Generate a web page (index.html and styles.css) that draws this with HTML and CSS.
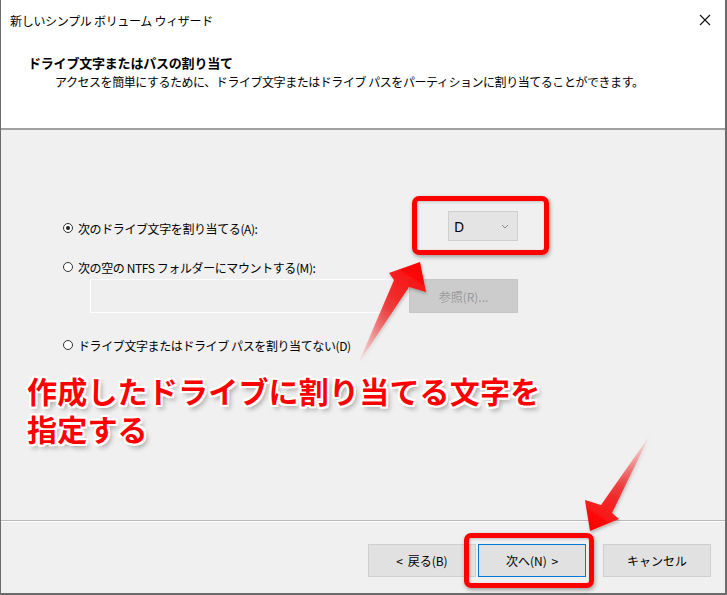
FILE: index.html
```html
<!DOCTYPE html>
<html lang="ja">
<head>
    <meta charset="UTF-8">
    <title>新しいシンプル ボリューム ウィザード</title>
    <link rel="stylesheet" href="styles.css">
</head>
<body>
    <div class="window">
        <div class="titlebar">
            <span class="title">新しいシンプル ボリューム ウィザード</span>
            <svg class="close" width="12" height="12" viewBox="0 0 12 12">
                <path d="M1 1 L11 11 M11 1 L1 11" stroke="#111" stroke-width="1.1" fill="none"/>
            </svg>
        </div>
        <div class="header">
            <div class="header-title">ドライブ文字またはパスの割り当て</div>
            <div class="header-sub">アクセスを簡単にするために、ドライブ文字またはドライブ パスをパーティションに割り当てることができます。</div>
        </div>

        <div class="content">
            <div class="option-row">
                <label class="option"><span class="radio checked"></span>次のドライブ文字を割り当てる(A):</label>
                <div class="dropdown">
                    <span>D</span>
                    <svg width="8" height="5" viewBox="0 0 8 5"><path d="M1 1 L4 4 L7 1" stroke="#8a8a8a" fill="none"/></svg>
                </div>
            </div>
            <div class="option-row">
                <label class="option"><span class="radio"></span>次の空の NTFS フォルダーにマウントする(M):</label>
            </div>
            <div class="path-row">
                <div class="path-input"></div>
                <button class="browse-btn" disabled>参照(R)...</button>
            </div>
            <div class="option-row last">
                <label class="option"><span class="radio"></span>ドライブ文字またはドライブ パスを割り当てない(D)</label>
            </div>
        </div>

        <div class="footer">
            <button class="btn">&lt; 戻る(B)</button>
            <button class="btn primary">次へ(N) &gt;</button>
            <button class="btn cancel">キャンセル</button>
        </div>

        <!-- annotations on top of the screenshot -->
        <div class="note">
            <div class="note-line">作成したドライブに割り当てる文字を</div>
            <div class="note-line">指定する</div>
        </div>
        <div class="mark mark-drive"></div>
        <div class="mark mark-next"></div>
        <svg class="arrows" width="727" height="595" viewBox="0 0 727 595">
            <defs>
                <linearGradient id="arrowUp" x1="358" y1="364" x2="420" y2="265" gradientUnits="userSpaceOnUse">
                    <stop offset="0" stop-color="#ff3030" stop-opacity="0"/>
                    <stop offset="0.55" stop-color="#f01818" stop-opacity="0.8"/>
                    <stop offset="1" stop-color="#ff0000"/>
                </linearGradient>
                <linearGradient id="arrowDown" x1="650" y1="435" x2="592" y2="528" gradientUnits="userSpaceOnUse">
                    <stop offset="0" stop-color="#ff3030" stop-opacity="0"/>
                    <stop offset="0.55" stop-color="#f01818" stop-opacity="0.8"/>
                    <stop offset="1" stop-color="#ff0000"/>
                </linearGradient>
                <filter id="soft" x="-20%" y="-20%" width="140%" height="140%">
                    <feDropShadow dx="1" dy="2" stdDeviation="1.5" flood-color="#000" flood-opacity="0.25"/>
                </filter>
            </defs>
            <polygon points="358,364 394,280 389,273 420,262 426,292 409,287" fill="url(#arrowUp)" filter="url(#soft)"/>
            <polygon points="650,435 612,513 619,519 590,531 585,500 601,505" fill="url(#arrowDown)" filter="url(#soft)"/>
        </svg>
    </div>
</body>
</html>
```

FILE: styles.css
```css
body {
    margin: 0;
    background: #ffffff;
    font-family: "Noto Sans CJK JP", "Noto Sans", sans-serif;
    font-size: 12px;
    color: #000;
}
.window {
    position: relative;
    width: 724px;
    height: 593px;
    border-left: 1px solid #6b6b6b;
    border-right: 2px solid #6b6b6b;
    border-bottom: 2px solid #6b6b6b;
    background: #f0f0f0;
    overflow: hidden;
}
.titlebar {
    height: 40px;
    background: #fff;
    display: flex;
    align-items: center;
    justify-content: space-between;
    padding: 0 14px 2px 9px;
}
.title {
    font-size: 12px;
    letter-spacing: -0.3px;
}
.header {
    height: 88px;
    background: #fff;
    border-bottom: 2px solid #a0a0a0;
    padding-left: 27px;
    box-sizing: border-box;
}
.header-title {
    font-weight: bold;
    font-size: 13px;
    letter-spacing: -0.2px;
    line-height: 16px;
    padding-top: 13px;
}
.header-sub {
    padding-left: 27px;
    line-height: 16px;
    margin-top: 3px;
    letter-spacing: -0.45px;
}
.content {
    height: 391px;
    box-sizing: border-box;
    padding: 88px 0 0 62px;
    border-bottom: 1px solid #b9b9b9;
}
.option-row {
    display: flex;
    align-items: center;
    height: 20px;
    margin-bottom: 19px;
}
.option-row.last {
    margin-top: 22px;
}
.option {
    display: flex;
    align-items: center;
    width: 385px;
    letter-spacing: -0.4px;
}
.radio {
    width: 8px;
    height: 8px;
    border: 1px solid #333;
    border-radius: 50%;
    margin-right: 5px;
    box-sizing: content-box;
    background: #fff;
    position: relative;
}
.radio.checked::after {
    content: "";
    position: absolute;
    left: 2px;
    top: 2px;
    width: 4px;
    height: 4px;
    border-radius: 50%;
    background: #222;
}
.dropdown {
    width: 70px;
    height: 30px;
    margin-top: -4px;
    box-sizing: border-box;
    background: #e4e4e4;
    border: 1px solid #cfcfcf;
    display: flex;
    align-items: center;
    justify-content: space-between;
    padding: 0 8px 0 5px;
    font-family: "Noto Sans", sans-serif;
    font-size: 14px;
}
.path-row {
    display: flex;
    gap: 15px;
    margin: -17px 0 0 27px;
}
.path-input {
    width: 304px;
    height: 34px;
    box-sizing: border-box;
    border: 1px solid #ffffff;
    background: #efefef;
}
.browse-btn {
    width: 109px;
    height: 34px;
    background: #cccccc;
    border: 1px solid #c6c6c6;
    color: #9b9b9b;
    font-family: inherit;
    font-size: 12px;
}
.footer {
    border-top: 1px solid #ffffff;
    display: flex;
    justify-content: flex-end;
    padding: 22px 14px 0 0;
}
.btn {
    width: 108px;
    height: 33px;
    background: #e1e1e1;
    border: 1px solid #cfcfcf;
    font-family: inherit;
    font-size: 12px;
    color: #000;
    margin-left: 2px;
    word-spacing: 2px;
}
.btn.primary {
    border: 1px solid #0078d7;
}
.btn.cancel {
    margin-left: 17px;
}
.note {
    position: absolute;
    left: 26px;
    top: 371px;
    font-size: 30px;
    font-weight: bold;
    color: #ff0000;
    letter-spacing: 0.2px;
    text-shadow:
        2px 0 0 #fff, -2px 0 0 #fff, 0 2px 0 #fff, 0 -2px 0 #fff,
        2px 2px 0 #fff, -2px -2px 0 #fff, 2px -2px 0 #fff, -2px 2px 0 #fff,
        3px 4px 5px rgba(0, 0, 0, 0.35);
}
.note-line {
    height: 38px;
    line-height: 38px;
}
.mark {
    position: absolute;
    border: 5px solid #ff0000;
    border-radius: 7px;
    box-sizing: border-box;
    box-shadow: 1px 2px 4px rgba(0, 0, 0, 0.35), inset 1px 1px 3px rgba(0, 0, 0, 0.2);
}
.mark-drive {
    left: 411px;
    top: 196px;
    width: 137px;
    height: 59px;
}
.mark-next {
    left: 463px;
    top: 533px;
    width: 130px;
    height: 55px;
}
.arrows {
    position: absolute;
    left: -1px;
    top: 0;
    pointer-events: none;
}
```
